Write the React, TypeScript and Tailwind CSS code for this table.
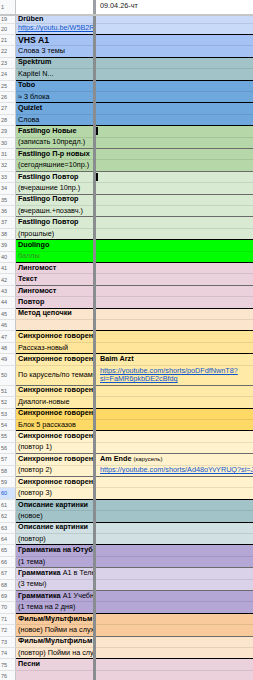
import React from "react";

type Line = "black" | "dark" | "thin" | "none";
type Row = {
  n: number;
  h?: string;
  bg: string;
  a?: React.ReactNode;
  b?: React.ReactNode;
  line: Line;
  bar?: boolean;
};

const Lk = ({ children }: { children: React.ReactNode }) => (
  <span className="text-[#1155cc] underline">{children}</span>
);

const B = ({ children }: { children: React.ReactNode }) => (
  <span className="font-bold">{children}</span>
);

const rows: Row[] = [
  { n: 19, h: "h-[8px]", bg: "bg-[#c9daf8]", a: <B>Drüben</B>, line: "thin" },
  { n: 20, bg: "bg-[#c9daf8]", a: <Lk>https://youtu.be/W5B2RqZ1</Lk>, line: "black" },
  { n: 21, bg: "bg-[#a4c2f4]", a: <span className="font-bold text-[8.7px]">VHS A1</span>, line: "thin" },
  { n: 22, bg: "bg-[#a4c2f4]", a: "Слова 3 темы", line: "black" },
  { n: 23, bg: "bg-[#a2c4c9]", a: <B>Spektrum</B>, line: "thin" },
  { n: 24, bg: "bg-[#a2c4c9]", a: "Kapitel N...", line: "black" },
  { n: 25, bg: "bg-[#6fa8dc]", a: <B>Tobo</B>, line: "thin" },
  { n: 26, bg: "bg-[#6fa8dc]", a: "≈ 3 блока", line: "black" },
  { n: 27, bg: "bg-[#6fa8dc]", a: <B>Quizlet</B>, line: "thin" },
  { n: 28, bg: "bg-[#6fa8dc]", a: "Слова", line: "black" },
  { n: 29, bg: "bg-[#b6d7a8]", a: <B>Fastlingo Новые</B>, line: "thin", bar: true },
  { n: 30, bg: "bg-[#b6d7a8]", a: "(записать 10предл.)", line: "dark" },
  { n: 31, bg: "bg-[#b6d7a8]", a: <B>Fastlingo П-р новых</B>, line: "thin" },
  { n: 32, bg: "bg-[#b6d7a8]", a: "(сегодняшние=10пр.)", line: "dark" },
  { n: 33, bg: "bg-[#d9ead3]", a: <B>Fastlingo Повтор</B>, line: "thin", bar: true },
  { n: 34, bg: "bg-[#d9ead3]", a: "(вчерашние 10пр.)", line: "dark" },
  { n: 35, bg: "bg-[#d9ead3]", a: <B>Fastlingo Повтор</B>, line: "thin" },
  { n: 36, bg: "bg-[#d9ead3]", a: "(вчерашн.+позавч.)", line: "dark" },
  { n: 37, bg: "bg-[#d9ead3]", a: <B>Fastlingo Повтор</B>, line: "thin" },
  { n: 38, bg: "bg-[#d9ead3]", a: "(прошлые)", line: "black" },
  { n: 39, bg: "bg-[#00ff00]", a: <B>Duolingo</B>, line: "thin" },
  { n: 40, bg: "bg-[#00ff00]", a: <span className="text-[#3d8a2e]">баллы</span>, line: "black" },
  { n: 41, bg: "bg-[#ead1dc]", a: <B>Лингомост</B>, line: "thin" },
  { n: 42, bg: "bg-[#ead1dc]", a: <B>Текст</B>, line: "dark" },
  { n: 43, bg: "bg-[#ead1dc]", a: <B>Лингомост</B>, line: "thin" },
  { n: 44, bg: "bg-[#ead1dc]", a: <B>Повтор</B>, line: "black" },
  { n: 45, bg: "bg-[#fce5cd]", a: <B>Метод цепочки</B>, line: "thin" },
  { n: 46, bg: "bg-[#fce5cd]", a: "", line: "black" },
  { n: 47, bg: "bg-[#ffe599]", a: <B>Синхронное говорение</B>, line: "thin" },
  { n: 48, bg: "bg-[#ffe599]", a: "Рассказ-новый", line: "black" },
  { n: 49, bg: "bg-[#ffeaa8]", a: <B>Синхронное говорение</B>, b: <B>Baim Arzt</B>, line: "thin" },
  {
    n: 50,
    h: "h-[20px]",
    bg: "bg-[#ffeaa8]",
    a: "По карусель/по темам",
    b: (
      <span className="leading-[8px] whitespace-normal">
        <Lk>https://youtube.com/shorts/poDFdfNwnT8?</Lk>
        <br />
        <Lk>si=FaMR6pkbDE2cBfdq</Lk>
      </span>
    ),
    line: "dark",
  },
  { n: 51, bg: "bg-[#ffeaa8]", a: <B>Синхронное говорение</B>, line: "thin" },
  { n: 52, bg: "bg-[#ffeaa8]", a: "Диалоги-новые", line: "black" },
  { n: 53, bg: "bg-[#ffd966]", a: <B>Синхронное говорение</B>, line: "thin" },
  { n: 54, bg: "bg-[#ffd966]", a: "Блок 5 рассказов", line: "black" },
  { n: 55, bg: "bg-[#fff2cc]", a: <B>Синхронное говорение</B>, line: "thin" },
  { n: 56, bg: "bg-[#fff2cc]", a: "(повтор 1)", line: "dark" },
  {
    n: 57,
    bg: "bg-[#fff2cc]",
    a: <B>Синхронное говорение</B>,
    b: (
      <span>
        <B>Am Ende</B> <span className="text-[6px]">(карусель)</span>
      </span>
    ),
    line: "thin",
  },
  {
    n: 58,
    bg: "bg-[#fff2cc]",
    a: "(повтор 2)",
    b: <Lk>https://youtube.com/shorts/Ad48oYvYRUQ?si=Jx</Lk>,
    line: "dark",
  },
  { n: 59, bg: "bg-[#fff2cc]", a: <B>Синхронное говорение</B>, line: "thin" },
  { n: 60, bg: "bg-[#fff2cc]", a: "(повтор 3)", line: "black" },
  { n: 61, bg: "bg-[#a2c4c9]", a: <B>Описание картинки</B>, line: "thin" },
  { n: 62, bg: "bg-[#a2c4c9]", a: "(новое)", line: "black" },
  { n: 63, bg: "bg-[#d0e0e3]", a: <B>Описание картинки</B>, line: "thin" },
  { n: 64, bg: "bg-[#d0e0e3]", a: "(повтор)", line: "black" },
  { n: 65, bg: "bg-[#b4a7d6]", a: <B>Грамматика на Ютубе</B>, line: "thin" },
  { n: 66, bg: "bg-[#b4a7d6]", a: "(1 тема)", line: "dark" },
  {
    n: 67,
    bg: "bg-[#d9d2e9]",
    a: (
      <span>
        <B>Грамматика</B> A1 в Телеграм
      </span>
    ),
    line: "thin",
  },
  { n: 68, bg: "bg-[#d9d2e9]", a: "(3 темы)", line: "dark" },
  {
    n: 69,
    bg: "bg-[#b4a7d6]",
    a: (
      <span>
        <B>Грамматика</B> A1 Учебник
      </span>
    ),
    line: "thin",
  },
  { n: 70, bg: "bg-[#b4a7d6]", a: "(1 тема на 2 дня)", line: "black" },
  { n: 71, bg: "bg-[#f9cb9c]", a: <B>Фильм/Мультфильм</B>, line: "thin" },
  { n: 72, bg: "bg-[#f9cb9c]", a: "(новое) Пойми на слух", line: "dark" },
  { n: 73, bg: "bg-[#fce5cd]", a: <B>Фильм/Мультфильм</B>, line: "thin" },
  { n: 74, bg: "bg-[#fce5cd]", a: "(повтор) Пойми на слух", line: "black" },
  { n: 75, bg: "bg-[#ead1dc]", a: <B>Песни</B>, line: "thin" },
  { n: 76, bg: "bg-[#ead1dc]", a: "", line: "thin" },
];

const lineCls: Record<Line, string> = {
  black: "border-b border-b-[#000000]",
  dark: "border-b border-b-[#6b6b6b]",
  thin: "border-b border-b-[rgba(0,0,0,0.09)]",
  none: "",
};

export default function App() {
  return (
    <div
      className="w-[253px] h-[680px] overflow-hidden bg-white text-[7.25px] text-[#000000]"
      style={{ fontFamily: '"Liberation Sans", Arial, sans-serif' }}
    >
      {/* header row 1 */}
      <div className="flex h-[15.5px] border-b-2 border-b-[#c4c7c5]">
        <div className="w-[16px] shrink-0 bg-[#f8f9fa] border-r border-r-[#c4c7c5] text-[5.5px] text-[#5f6368] flex items-center pl-[1px]">
          1
        </div>
        <div className="w-[77px] shrink-0 bg-white"></div>
        <div className="w-[3px] shrink-0 bg-[#9aa0a6]"></div>
        <div className="flex-1 bg-white flex items-center pl-[4px] text-[#222222] whitespace-nowrap">
          09.04.26-чт
        </div>
      </div>
      {rows.map((r) => (
        <div key={r.n} className={`flex ${r.h ?? "h-[11.42px]"}`}>
          <div
            className={`w-[16px] shrink-0 border-r border-r-[#c4c7c5] border-b border-b-[#e1e3e1] text-[5.5px] flex items-center pl-[1px] ${
              r.n === 60 ? "bg-[#d3e3fd] text-[#0b57d0]" : "bg-[#f8f9fa] text-[#5f6368]"
            }`}
          >
            {r.n}
          </div>
          <div
            className={`w-[77px] shrink-0 overflow-hidden whitespace-nowrap flex items-center pl-[2px] text-[#000000] ${r.bg} ${lineCls[r.line]}`}
          >
            {r.a}
          </div>
          <div className="w-[3px] shrink-0 bg-[#8a8d90]"></div>
          <div
            className={`relative flex-1 overflow-hidden whitespace-nowrap flex items-center pl-[4px] ${r.bg} ${lineCls[r.line]}`}
          >
            {r.bar && <div className="absolute left-0 top-[1px] w-[1.5px] h-[8px] bg-[#000000]"></div>}
            {r.b}
          </div>
        </div>
      ))}
    </div>
  );
}
